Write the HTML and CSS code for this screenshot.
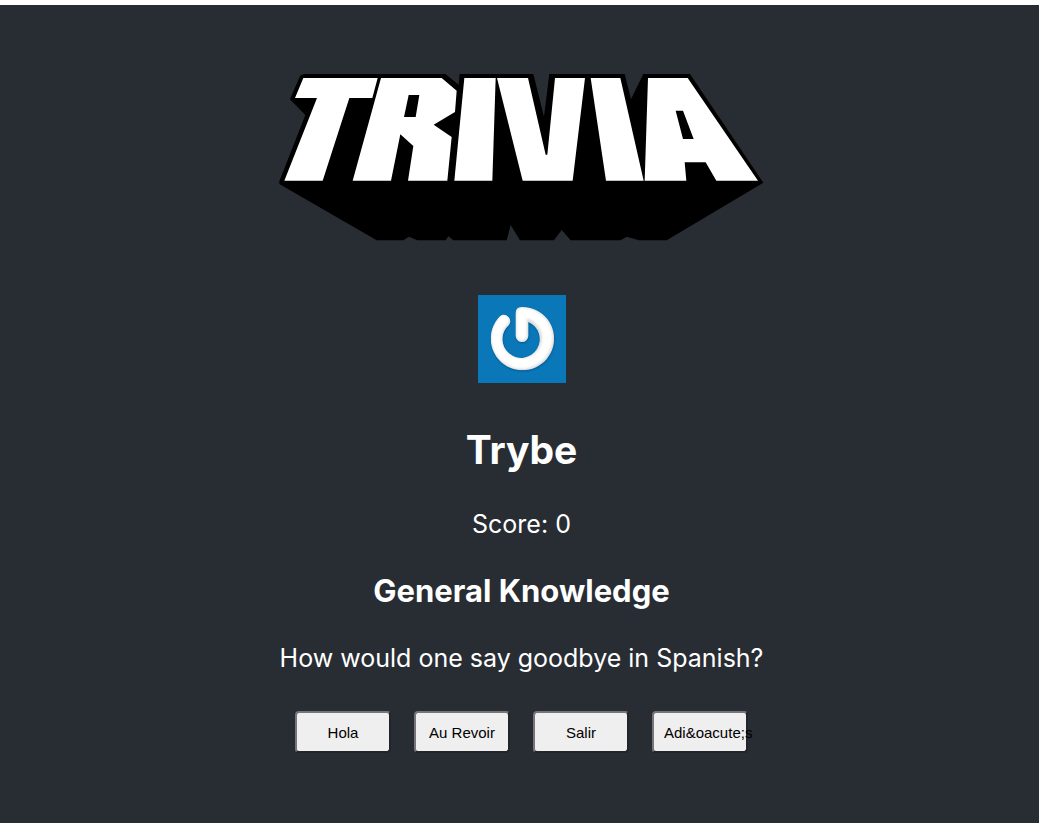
FILE: index.html
```
<!DOCTYPE html>
<html lang="en">
<head>
<meta charset="utf-8">
<title>Trivia</title>
<link rel="stylesheet" href="styles.css">
</head>
<body>
<main class="game">
  <svg class="logo" viewBox="27 42 1455 501" role="img" aria-label="Trivia">
    <path d="M100 42H526L566 74L569 42H790L822 170L838 42H1064L1083 118L1120 42H1260L1480 368L1190 541H1107L1070 530L1052 541H902L875 510L852 541H750L722 495L710 541H550L535 529L527 541H442L417 530L400 541H320L28 372V364L106 165L60 118L90 48Z"/>
    <g fill="#fff">
      <path d="M100 54H323L307 114H238L158 362H43L141 114H75Z"/>
      <path fill-rule="evenodd" d="M333 54H515L560 92L555 156L491 194L545 231L532 362H414L430 258L391 223L363 362H248ZM416 105L402 171H437L448 105Z"/>
      <path d="M583 54H677L667 362H553Z"/>
      <path d="M681 54H774L827 284H832L855 54H945L908 362H758Z"/>
      <path d="M962 54H1051L1121 362H1008Z"/>
      <path fill-rule="evenodd" d="M1134 54H1253L1464 362H1339L1307 307H1244L1249 362H1124ZM1217 152L1239 237H1271L1239 152Z"/>
    </g>
  </svg>
  <header class="player">
    <svg class="avatar" viewBox="0 0 264 264" role="img" aria-label="Player avatar">
      <defs>
        <filter id="soft"><feGaussianBlur stdDeviation="3"/></filter>
        <clipPath id="ring"><path d="M113 55Q113 36 131 36A95 95 0 1 1 66 64A19 19 0 0 1 93 90A56 56 0 1 0 151 81V122A19 19 0 0 1 113 122Z"/></clipPath>
      </defs>
      <path fill="#0a77b9" d="M0 0H264V264H0Z"/>
      <path fill="#075b91" filter="url(#soft)" transform="translate(1 3)" d="M113 55Q113 36 131 36A95 95 0 1 1 66 64A19 19 0 0 1 93 90A56 56 0 1 0 151 81V122A19 19 0 0 1 113 122Z"/>
      <g clip-path="url(#ring)">
        <path fill="#dedee0" d="M0 0H264V264H0Z"/>
        <path fill="none" stroke="#fff" stroke-width="31" stroke-linecap="round" stroke-linejoin="round" filter="url(#soft)" d="M131 121V53A76 76 0 1 1 78 75"/>
      </g>
    </svg>
    <h1 class="name">Trybe</h1>
    <p class="score">Score: 0</p>
  </header>
  <section class="question">
    <h2 class="category">General Knowledge</h2>
    <p class="prompt">How would one say goodbye in Spanish?</p>
    <div class="answers">
      <button class="answer" type="button">Hola</button>
      <button class="answer" type="button">Au Revoir</button>
      <button class="answer" type="button">Salir</button>
      <button class="answer" type="button">Adi&amp;oacute;s</button>
    </div>
  </section>
</main>
</body>
</html>
```
FILE: styles.css
```
* { box-sizing: border-box; }
body {
  margin: 0;
  padding: 5px 0 6px;
  min-height: 100vh;
  display: flex;
  background: #fff;
  font-family: Inter, "Liberation Sans", sans-serif;
}
.game {
  flex: 1;
  display: flex;
  flex-direction: column;
  align-items: center;
  padding: 69px 0 60px 4px;
  background: #282c33;
  color: #fff;
  text-align: center;
}
.logo { width: 485px; max-width: 100%; height: auto; }
.player, .question {
  display: flex;
  flex-direction: column;
  align-items: center;
}
.player { margin-top: 54px; }
.avatar { width: 88px; height: 88px; }
.name { margin: 43px 0 0; font-size: 39px; line-height: 48px; }
.score { margin: 34px 0 0; font-size: 25px; line-height: 32px; }
.question { margin-top: 31px; }
.category { margin: 0; font-size: 31px; line-height: 40px; }
.prompt { margin: 31px 0 0; font-size: 25px; line-height: 32px; }
.answers { display: flex; flex-wrap: wrap; gap: 23px; margin-top: 37px; }
.answer {
  width: 96px;
  height: 42px;
  padding: 0 10px;
  border: 2px solid;
  border-color: #77747a #222529 #222529 #77747a;
  border-radius: 4px;
  background: #efefef;
  color: #000;
  font-family: "Liberation Sans", Arial, sans-serif;
  font-size: 15px;
  white-space: nowrap;
}
```
